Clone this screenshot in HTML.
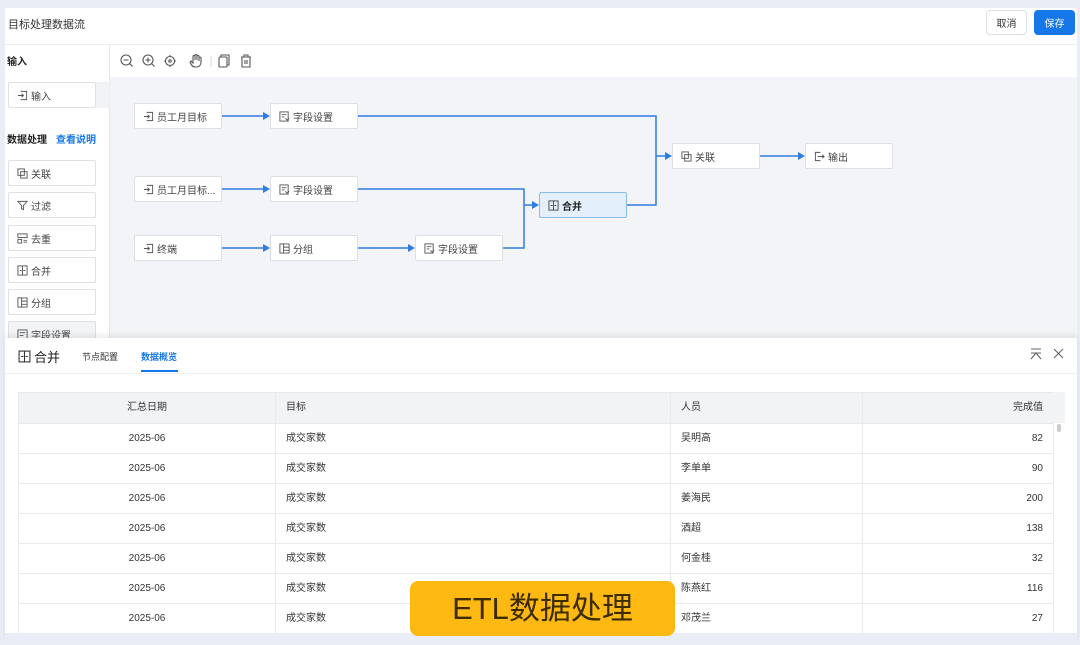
<!DOCTYPE html>
<html><head><meta charset="utf-8"><style>
*{box-sizing:border-box;margin:0;padding:0}
body{width:1080px;height:645px;background:#e9eef6;font-family:"Liberation Sans","Noto Sans CJK SC",sans-serif;position:relative;overflow:hidden;color:#333}
.abs{position:absolute}
.card{left:5px;top:8px;width:1072px;height:632px;background:#fff}
.node{position:absolute;width:88px;height:26px;background:#fff;border:1px solid #dcdfe4;border-radius:2px;font-size:10px;color:#444;padding-left:8px;white-space:nowrap;display:flex;align-items:center}
.node svg{margin-right:3px;flex:none}
.li{position:absolute;left:8px;width:88px;height:26px;background:#fff;border:1px solid #dde0e5;border-radius:2px;font-size:10px;color:#444;padding-left:8px;display:flex;align-items:center}
.li svg{margin-right:3px;flex:none}
table{border-collapse:collapse;font-size:10px;color:#333}
td,th{border:1px solid #e8eaed;height:30px;line-height:12px;font-weight:normal;padding:0 10px;vertical-align:middle}
th{background:#f2f3f5;height:31px}
</style></head><body>
<div class="abs card"></div>
<div class="abs" style="left:5px;top:44px;width:1072px;height:1px;background:#eceef1"></div>
<div class="abs" style="left:8px;top:16px;font-size:11px;color:#333">目标处理数据流</div>
<div class="abs" style="left:986px;top:10px;width:41px;height:25px;border:1px solid #dcdfe4;border-radius:4px;font-size:10px;display:flex;align-items:center;justify-content:center;color:#333">取消</div>
<div class="abs" style="left:1034px;top:10px;width:41px;height:25px;background:#1677e8;border-radius:4px;font-size:10px;display:flex;align-items:center;justify-content:center;color:#fff">保存</div>

<!-- left panel -->
<div class="abs" style="left:109px;top:45px;width:1px;height:293px;background:#e6e8eb"></div>
<div class="abs" style="left:7px;top:53px;font-size:10px;font-weight:bold;color:#222">输入</div>
<div class="abs" style="left:96px;top:82px;width:75px;height:26px;background:#eef0f3;opacity:.8"></div>
<div class="li" style="top:82px"><svg width="11" height="11" viewBox="0 0 12 12" fill="none" stroke="#555"><path d="M4 1.5h6.5v9H4M1 6h6M5 4l2 2-2 2"/></svg>输入</div>
<div class="abs" style="left:7px;top:131px;font-size:10px;font-weight:bold;color:#222">数据处理</div>
<div class="abs" style="left:56px;top:131px;font-size:10px;color:#1677e8;font-weight:bold">查看说明</div>
<div class="li" style="top:160px"><svg width="11" height="11" viewBox="0 0 12 12" fill="none" stroke="#555"><rect x="1" y="1" width="7" height="7"/><rect x="4" y="4" width="7" height="7"/></svg>关联</div>
<div class="li" style="top:192px"><svg width="11" height="11" viewBox="0 0 12 12" fill="none" stroke="#555"><path d="M1 1.5h10L7 6v4.5L5 9.5V6z"/></svg>过滤</div>
<div class="li" style="top:225px"><svg width="11" height="11" viewBox="0 0 12 12" fill="none" stroke="#555"><rect x="1" y="1" width="10" height="4"/><path d="M1 7h4v4H1zM7 8h4M7 10h4"/></svg>去重</div>
<div class="li" style="top:257px"><svg width="11" height="11" viewBox="0 0 12 12" fill="none" stroke="#555"><rect x="1" y="1" width="10" height="10"/><path d="M6 1v10M3 6h2M7 6h2"/></svg>合并</div>
<div class="li" style="top:289px"><svg width="11" height="11" viewBox="0 0 12 12" fill="none" stroke="#555"><rect x="1" y="1" width="4" height="10"/><path d="M5 1h6v10H5M5 4.5h6M5 8h6"/></svg>分组</div>
<div class="li" style="top:321px;background:#f3f4f6"><svg width="11" height="11" viewBox="0 0 12 12" fill="none" stroke="#555"><rect x="1" y="1" width="10" height="10"/><path d="M3 4h6M3 7h4"/></svg>字段设置</div>

<!-- toolbar -->
<div class="abs" style="left:110px;top:77px;width:967px;height:261px;background:#f2f4f7"></div>
<svg class="abs" style="left:118px;top:53px" width="140" height="16" viewBox="0 0 140 16" fill="none" stroke="#555" stroke-width="1.1">
<circle cx="8" cy="7" r="5"/><path d="M5.5 7h5M11.5 10.5l3 3"/>
<circle cx="30" cy="7" r="5"/><path d="M27.5 7h5M30 4.5v5M33.5 10.5l3 3"/>
<circle cx="52" cy="8" r="4.5"/><circle cx="52" cy="8" r="1.2"/><path d="M52 2v2M52 12v2M46 8h2M56 8h2"/>
<path d="M77 14c-3 0-4-3-5-5l1-1 2 2V3.5a1 1 0 012 0V7V2.5a1 1 0 012 0V7V3.5a1 1 0 012 0V8V5a1 1 0 012 0v4c0 3-2 5-4 5z"/>
<path d="M93 3v11" stroke="#ddd"/>
<rect x="101" y="4" width="8" height="10" rx="1"/><path d="M103 4V2h8v10h-2"/>
<path d="M123 4h10M126 4V2h4v2M124 4v10h8V4M127 7v4M129 7v4"/>
</svg>

<!-- edges -->
<svg class="abs" style="left:0;top:0" width="1080" height="340" fill="none" stroke="#2f7de1" stroke-width="1.5">
<path d="M222 116H264M222 189H264M222 248H264M358 248H409M760 156H799"/>
<path d="M358 116H656V156H666M358 189H524V205H533M503 248H524V205M627 205H656V156"/>
<g fill="#2f7de1" stroke="none">
<path d="M270 116l-7-4v8zM270 189l-7-4v8zM270 248l-7-4v8zM415 248l-7-4v8zM672 156l-7-4v8zM539 205l-7-4v8zM805 156l-7-4v8z"/></g>
</svg>

<div class="node" style="left:134px;top:103px"><svg width="11" height="11" viewBox="0 0 12 12" fill="none" stroke="#555"><path d="M4 1.5h6.5v9H4M1 6h6M5 4l2 2-2 2"/></svg>员工月目标</div>
<div class="node" style="left:270px;top:103px"><svg width="11" height="11" viewBox="0 0 12 12" fill="none" stroke="#555"><rect x="1" y="1" width="9" height="10"/><path d="M3 4h5M3 6.5h3M7 8l2 2 2-2"/></svg>字段设置</div>
<div class="node" style="left:134px;top:176px"><svg width="11" height="11" viewBox="0 0 12 12" fill="none" stroke="#555"><path d="M4 1.5h6.5v9H4M1 6h6M5 4l2 2-2 2"/></svg>员工月目标...</div>
<div class="node" style="left:270px;top:176px"><svg width="11" height="11" viewBox="0 0 12 12" fill="none" stroke="#555"><rect x="1" y="1" width="9" height="10"/><path d="M3 4h5M3 6.5h3M7 8l2 2 2-2"/></svg>字段设置</div>
<div class="node" style="left:134px;top:235px"><svg width="11" height="11" viewBox="0 0 12 12" fill="none" stroke="#555"><path d="M4 1.5h6.5v9H4M1 6h6M5 4l2 2-2 2"/></svg>终端</div>
<div class="node" style="left:270px;top:235px"><svg width="11" height="11" viewBox="0 0 12 12" fill="none" stroke="#555"><rect x="1" y="1" width="4" height="10"/><path d="M5 1h6v10H5M5 4.5h6M5 8h6"/></svg>分组</div>
<div class="node" style="left:415px;top:235px"><svg width="11" height="11" viewBox="0 0 12 12" fill="none" stroke="#555"><rect x="1" y="1" width="9" height="10"/><path d="M3 4h5M3 6.5h3M7 8l2 2 2-2"/></svg>字段设置</div>
<div class="node" style="left:539px;top:192px;background:#e3f0fc;border-color:#8dbbe8;color:#222;font-weight:bold"><svg width="11" height="11" viewBox="0 0 12 12" fill="none" stroke="#444"><rect x="1" y="1" width="10" height="10"/><path d="M6 1v10M3 6h2M7 6h2"/></svg>合并</div>
<div class="node" style="left:672px;top:143px"><svg width="11" height="11" viewBox="0 0 12 12" fill="none" stroke="#555"><rect x="1" y="1" width="7" height="7"/><rect x="4" y="4" width="7" height="7"/></svg>关联</div>
<div class="node" style="left:805px;top:143px"><svg width="11" height="11" viewBox="0 0 12 12" fill="none" stroke="#555"><path d="M7 1.5H1.5v9H7M4 6h7M9 4l2 2-2 2"/></svg>输出</div>

<!-- bottom panel -->
<div class="abs" style="left:5px;top:338px;width:1072px;height:302px;background:#fff;box-shadow:0 -3px 6px rgba(0,0,0,0.08)"></div>
<div class="abs" style="left:18px;top:347px;font-size:13px;color:#222;display:flex;align-items:center"><svg width="13" height="13" viewBox="0 0 12 12" fill="none" stroke="#333" style="margin-right:3px"><rect x="1" y="1" width="10" height="10"/><path d="M6 1v10M3 6h2M7 6h2"/></svg>合并</div>
<div class="abs" style="left:82px;top:350px;font-size:9px;color:#333">节点配置</div>
<div class="abs" style="left:141px;top:350px;font-size:9px;color:#1677e8;font-weight:bold">数据概览</div>
<div class="abs" style="left:141px;top:370px;width:37px;height:2px;background:#1677e8"></div>
<div class="abs" style="left:5px;top:373px;width:1072px;height:1px;background:#eef0f2"></div>
<svg class="abs" style="left:1030px;top:348px" width="40" height="12" fill="none" stroke="#666" stroke-width="1.1"><path d="M1 1h10M1 5l5 0 5 0M6 5l-5 6M6 5l5 6"/><path d="M24 1l9 9M33 1l-9 9"/></svg>

<table class="abs" style="left:18px;top:392px;width:1036px">
<tr><th style="width:257px;text-align:center">汇总日期</th><th style="width:395px;text-align:left">目标</th><th style="width:192px;text-align:left">人员</th><th style="text-align:right">完成值</th></tr>
<tr><td align="center">2025-06</td><td>成交家数</td><td>吴明高</td><td align="right">82</td></tr>
<tr><td align="center">2025-06</td><td>成交家数</td><td>李单单</td><td align="right">90</td></tr>
<tr><td align="center">2025-06</td><td>成交家数</td><td>姜海民</td><td align="right">200</td></tr>
<tr><td align="center">2025-06</td><td>成交家数</td><td>酒超</td><td align="right">138</td></tr>
<tr><td align="center">2025-06</td><td>成交家数</td><td>何金桂</td><td align="right">32</td></tr>
<tr><td align="center">2025-06</td><td>成交家数</td><td>陈燕红</td><td align="right">116</td></tr>
<tr><td align="center">2025-06</td><td>成交家数</td><td>邓茂兰</td><td align="right">27</td></tr>
</table>
<div class="abs" style="left:1053px;top:392px;width:12px;height:31px;background:#f2f3f5"></div>
<div class="abs" style="left:1057px;top:424px;width:4px;height:8px;background:#ccc;border-radius:2px"></div>
<div class="abs" style="left:5px;top:633px;width:1072px;height:12px;background:#e9eef6"></div>

<div class="abs" style="left:410px;top:581px;width:265px;height:55px;background:#fdb912;border-radius:8px;font-size:31px;line-height:55px;text-align:center;color:#3d2c00">ETL数据处理</div>
</body></html>
